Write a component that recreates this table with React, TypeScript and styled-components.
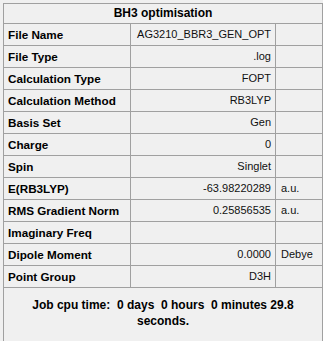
import React from "react";
import styled, { createGlobalStyle } from "styled-components";

interface Entry {
    label: string;
    value: string;
    unit?: string;
}

const entries: Entry[] = [
    { label: "File Name", value: "AG3210_BBR3_GEN_OPT" },
    { label: "File Type", value: ".log" },
    { label: "Calculation Type", value: "FOPT" },
    { label: "Calculation Method", value: "RB3LYP" },
    { label: "Basis Set", value: "Gen" },
    { label: "Charge", value: "0" },
    { label: "Spin", value: "Singlet" },
    { label: "E(RB3LYP)", value: "-63.98220289", unit: "a.u." },
    { label: "RMS Gradient Norm", value: "0.25856535", unit: "a.u." },
    { label: "Imaginary Freq", value: "" },
    { label: "Dipole Moment", value: "0.0000", unit: "Debye" },
    { label: "Point Group", value: "D3H" },
];

const GlobalStyle = createGlobalStyle`
    html, body {
        margin: 0;
        padding: 0;
        background: #f0f0f0;
        font-family: "Liberation Sans", Arial, sans-serif;
        font-size: 12px;
        color: #000;
    }
`;

const App: React.FC = () => (
    <>
        <GlobalStyle />
        <Page>
            <Panel>
                <Title>BH3 optimisation</Title>
                {entries.map(e => (
                    <Row key={e.label}>
                        <LabelCell>{e.label}</LabelCell>
                        <ValueCell>{e.value}</ValueCell>
                        <UnitCell>{e.unit}</UnitCell>
                    </Row>
                ))}
                <Footer>
                    Job cpu time:&nbsp; 0 days&nbsp; 0 hours&nbsp; 0 minutes 29.8
                    <br />
                    seconds.
                </Footer>
            </Panel>
        </Page>
    </>
);

const Page = styled.div`
    padding: 3px 0 0 3px;
    width: 323px;
    height: 341px;
    box-sizing: border-box;
    overflow: hidden;
`;

const Panel = styled.div`
    width: 320px;
    height: 360px;
    box-sizing: border-box;
    border: 1px solid #a0a0a0;
    background: #f0f0f0;
    display: flex;
    flex-direction: column;
`;

const Title = styled.div`
    height: 20px;
    box-sizing: border-box;
    border-bottom: 1px solid #a0a0a0;
    font-weight: bold;
    text-align: center;
    line-height: 19px;
`;

const Row = styled.div`
    display: flex;
    height: 22px;
    box-sizing: border-box;
    border-bottom: 1px solid #a0a0a0;
    line-height: 21px;
`;

const LabelCell = styled.div`
    width: 127px;
    flex: none;
    box-sizing: border-box;
    border-right: 1px solid #a0a0a0;
    padding-left: 4px;
    font-size: 11.7px;
    font-weight: bold;
    white-space: nowrap;
`;

const ValueCell = styled.div`
    width: 145px;
    flex: none;
    box-sizing: border-box;
    border-right: 1px solid #a0a0a0;
    padding-right: 4px;
    font-size: 11px;
    color: #111;
    text-align: right;
    white-space: nowrap;
`;

const UnitCell = styled.div`
    flex: 1;
    padding-left: 5px;
    font-size: 11px;
    color: #111;
    white-space: nowrap;
`;

const Footer = styled.div`
    padding-top: 9px;
    font-weight: bold;
    text-align: center;
    line-height: 16px;
    white-space: nowrap;
`;

export default App;
